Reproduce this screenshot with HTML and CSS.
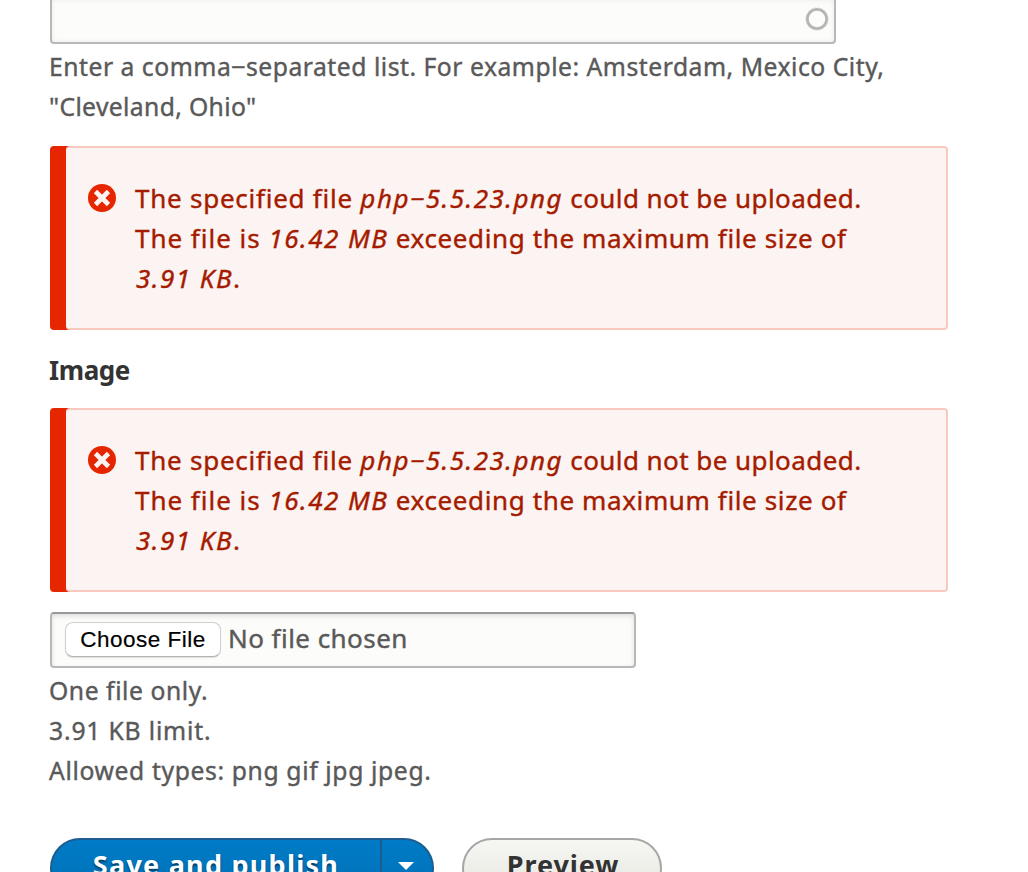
FILE: index.html
```
<!DOCTYPE html>
<html lang="en">
<head>
  <meta charset="UTF-8">
  <meta name="viewport" content="width=device-width, initial-scale=1.0">
  <title>Create Article</title>
  <link rel="stylesheet" href="styles.css">
</head>
<body>
  <form class="node-form">
    <div class="tags-field">
      <svg class="throbber" viewBox="0 0 24 24" width="24" height="24">
        <circle cx="12" cy="12" r="9.7" fill="none" stroke="#b5b5b5" stroke-width="2.8"/>
        <circle cx="12" cy="12" r="11.1" fill="none" stroke="#cfcfcf" stroke-width="0.9" stroke-dasharray="2 1.5"/>
      </svg>
    </div>
    <div class="description tags-description">
      <div class="d1">Enter a comma‒separated list. For example: Amsterdam, Mexico City,</div>
      <div class="d2">"Cleveland, Ohio"</div>
    </div>

    <div class="message message-error">
      <svg class="error-icon" viewBox="0 0 28 28" width="28" height="28">
        <circle cx="14" cy="14" r="14" fill="#e62600"/>
        <path d="M7.5 7.5l13 13M20.5 7.5l-13 13" stroke="#fcf4f2" stroke-width="4.6"/>
      </svg>
      <div>
        <div class="m1">The specified file <em>php‒5.5.23.png</em><span class="rest"> could not be uploaded.</span></div>
        <div class="m2">The file is <em>16.42 MB</em><span class="rest"> exceeding the maximum file size of</span></div>
        <div class="m3"><em>3.91 KB</em>.</div>
      </div>
    </div>

    <h4 class="label">Image</h4>

    <div class="message message-error">
      <svg class="error-icon" viewBox="0 0 28 28" width="28" height="28">
        <circle cx="14" cy="14" r="14" fill="#e62600"/>
        <path d="M7.5 7.5l13 13M20.5 7.5l-13 13" stroke="#fcf4f2" stroke-width="4.6"/>
      </svg>
      <div>
        <div class="m1">The specified file <em>php‒5.5.23.png</em><span class="rest"> could not be uploaded.</span></div>
        <div class="m2">The file is <em>16.42 MB</em><span class="rest"> exceeding the maximum file size of</span></div>
        <div class="m3"><em>3.91 KB</em>.</div>
      </div>
    </div>

    <div class="file-field">
      <button type="button" class="file-button">Choose File</button>
      <span class="file-name">No file chosen</span>
    </div>
    <div class="description">
      <div class="d3">One file only.</div>
      <div class="d4">3.91 KB limit.</div>
      <div class="d5">Allowed types: png gif jpg jpeg.</div>
    </div>

    <div class="actions">
      <div class="dropbutton">
        <button type="button" class="button-primary">Save and publish</button>
        <button type="button" class="button-toggle" aria-label="List additional actions"><span class="arrow"></span></button>
      </div>
      <button type="button" class="button-preview">Preview</button>
    </div>
  </form>
</body>
</html>
```
FILE: styles.css
```
* {
  box-sizing: border-box;
}

body {
  margin: 0;
  background-color: #fff;
  color: #333;
  font-family: "Noto Sans", sans-serif;
  font-size: 26px;
  line-height: 40px;
}

button {
  font-family: inherit;
  margin: 0;
  padding: 0;
}

.node-form {
  display: flex;
  flex-direction: column;
  align-items: flex-start;
  height: 872px;
  padding-left: 50px;
  overflow: hidden;
  white-space: nowrap;
}

.node-form > * {
  flex-shrink: 0;
}

.tags-field {
  display: flex;
  justify-content: flex-end;
  width: 786px;
  height: 44px;
  padding: 7px 5px 0 0;
  border: 2px solid #b8b8b8;
  border-top: 0;
  border-radius: 0 0 4px 4px;
  background-color: #fcfcfa;
  box-shadow: inset 0 0 5px rgba(0, 0, 0, 0.08);
}

.description {
  margin: 3px 0 0 -1px;
  color: #595959;
  font-size: 24.7px;
  -webkit-text-stroke: 0.4px;
}

.d1 {
  letter-spacing: 0.52px;
}

.d2 {
  letter-spacing: 0.36px;
}

.d3 {
  letter-spacing: 0.56px;
}

.d4 {
  letter-spacing: 0.82px;
}

.d5 {
  letter-spacing: 0.63px;
}

.message {
  display: flex;
  width: 882px;
  height: 184px;
  margin-left: 16px;
  padding: 30px 0 0 22px;
  border: 2px solid #f9c9bf;
  border-left: 0;
  border-radius: 4px;
  background-color: #fcf4f2;
  box-shadow: -16px 0 0 #e62600;
  color: #a51b00;
  -webkit-text-stroke: 0.4px;
}

.message em {
  letter-spacing: 1.48px;
}

.m1 {
  letter-spacing: 0.75px;
}

.m1 .rest {
  letter-spacing: 0.44px;
}

.m2 {
  letter-spacing: 0.98px;
}

.m2 .rest {
  letter-spacing: 0.62px;
}

.m3 {
  padding-left: 1px;
}

.tags-description + .message {
  margin-top: 19px;
}

.error-icon {
  margin: 6px 19px 0 0;
}

.label {
  margin: 20px 0 18px -1px;
  font-size: 26px;
  font-weight: bold;
  letter-spacing: -0.4px;
}

.file-field {
  display: flex;
  align-items: flex-start;
  width: 586px;
  height: 56px;
  margin-top: 20px;
  padding: 8px 13px;
  border: 2px solid #b8b8b8;
  border-top-color: #999;
  border-radius: 4px;
  background-color: #fcfcfa;
  box-shadow: inset 0 2px 5px rgba(0, 0, 0, 0.12);
  color: #595959;
}

.file-button {
  width: 156px;
  height: 35px;
  margin-right: 7px;
  padding-top: 1px;
  border: 1px solid #d0d0d0;
  border-bottom-color: #b4b4b4;
  border-radius: 8px;
  background-color: #fff;
  box-shadow: 0 1px 1px rgba(0, 0, 0, 0.12);
  color: #000;
  font-family: "Liberation Sans", Arial, sans-serif;
  font-size: 22.5px;
  letter-spacing: 0.5px;
  -webkit-text-stroke: 0.2px;
}

.file-name {
  letter-spacing: 0.45px;
  line-height: 32px;
  -webkit-text-stroke: 0.4px;
}

.actions {
  display: flex;
  margin-top: 47px;
}

.dropbutton {
  display: flex;
  width: 384px;
  height: 60px;
  margin-right: 28px;
  border: 2px solid #1e5c90;
  border-radius: 40px;
  background: linear-gradient(#007bc6, #0071b8);
  overflow: hidden;
}

.button-primary,
.button-toggle {
  border: 0;
  background: none;
  color: #fff;
  font-size: 27px;
  font-weight: bold;
  text-shadow: 0 2px 2px rgba(0, 0, 0, 0.5);
}

.button-primary {
  width: 328px;
  padding-bottom: 8px;
  letter-spacing: 1.25px;
}

.button-toggle {
  width: 52px;
  padding-bottom: 4px;
  border-left: 2px solid #1e5c90;
}

.arrow {
  display: block;
  width: 0;
  margin-left: 16px;
  border: 8px solid transparent;
  border-top-color: #fff;
  border-bottom: 0;
}

.button-preview {
  width: 200px;
  height: 60px;
  padding: 0 0 8px 2px;
  border: 2px solid #a6a6a6;
  border-radius: 40px;
  background: linear-gradient(#f6f6f3, #e7e7df);
  color: #333;
  font-size: 27px;
  font-weight: bold;
  letter-spacing: 0.9px;
  text-shadow: 0 1px #fff;
}
```
